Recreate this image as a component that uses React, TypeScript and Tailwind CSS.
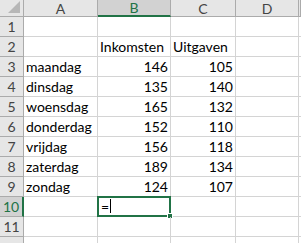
import React from "react";

const cols = ["A", "B", "C", "D", ""];
const data: Record<number, [string, string, string]> = {
  2: ["", "Inkomsten", "Uitgaven"],
  3: ["maandag", "146", "105"],
  4: ["dinsdag", "135", "140"],
  5: ["woensdag", "165", "132"],
  6: ["donderdag", "152", "110"],
  7: ["vrijdag", "156", "118"],
  8: ["zaterdag", "189", "134"],
  9: ["zondag", "124", "107"],
};

export default function App() {
  const rows = Array.from({ length: 12 }, (_, i) => i + 1);
  return (
    <div
      className="h-[243px] w-[301px] overflow-hidden bg-white text-[14px] text-black"
      style={{ fontFamily: "Lato, 'Open Sans', sans-serif" }}
    >
      <div className="grid grid-cols-[24px_74px_73px_65px_63px_1fr] grid-rows-[17px_repeat(12,20px)]">
        {/* corner */}
        <div className="relative border-r border-b border-[#ababab] bg-[#e6e6e6]">
          <svg className="absolute right-[3px] bottom-[3px]" width="12" height="12" viewBox="0 0 12 12">
            <polygon points="12,0 12,12 0,12" fill="#b7b7b7" />
          </svg>
        </div>
        {cols.map((c) =>
          c === "B" ? (
            <div
              key={c}
              className="flex items-end justify-center border-r border-[#ababab] border-b-2 border-b-[#217346] bg-[#d2d2d2] leading-[15px] text-[#217346]"
            >
              {c}
            </div>
          ) : (
            <div
              key={c || "E"}
              className="flex items-end justify-center border-r border-b border-[#ababab] bg-[#e6e6e6] leading-[15px] text-[#444]"
            >
              {c}
            </div>
          )
        )}
        {rows.map((r) => {
          const d = data[r] || ["", "", ""];
          const sel = r === 10;
          return (
            <React.Fragment key={r}>
              <div
                className={
                  sel
                    ? "flex items-end justify-center border-r-2 border-r-[#217346] border-b border-b-[#ababab] bg-[#d2d2d2] pb-[1px] leading-[17px] text-[#217346]"
                    : "flex items-end justify-center border-r border-b border-[#ababab] bg-[#e6e6e6] pb-[1px] leading-[17px] text-[#444]"
                }
              >
                {r <= 11 ? r : ""}
              </div>
              <div className="flex items-end border-r border-b border-[#d4d4d4] pb-[1px] pl-[2px] leading-[17px]">
                {d[0]}
              </div>
              <div
                className={
                  "relative flex items-end border-r border-b border-[#d4d4d4] pb-[1px] leading-[17px] " +
                  (r === 2 ? "pl-[2px]" : "justify-end pr-[2px]")
                }
              >
                {d[1]}
                {sel && (
                  <div className="absolute -left-[1px] -top-[1px] -right-[1px] -bottom-[1px] border-2 border-[#217346]">
                    <div className="flex h-full items-end pb-[1px] pl-[2px] leading-[15px]">
                      <span>=</span>
                      <span className="mb-[1px] ml-[1px] h-[14px] w-[1px] bg-black" />
                    </div>
                    <div className="absolute -right-[4px] -bottom-[4px] h-[6px] w-[6px] border border-white bg-[#217346]" />
                  </div>
                )}
              </div>
              <div
                className={
                  "flex items-end border-r border-b border-[#d4d4d4] pb-[1px] leading-[17px] " +
                  (r === 2 ? "pl-[2px]" : "justify-end pr-[2px]")
                }
              >
                {d[2]}
              </div>
              <div className="border-r border-b border-[#d4d4d4]" />
              <div className="border-b border-[#d4d4d4]" />
            </React.Fragment>
          );
        })}
      </div>
    </div>
  );
}
